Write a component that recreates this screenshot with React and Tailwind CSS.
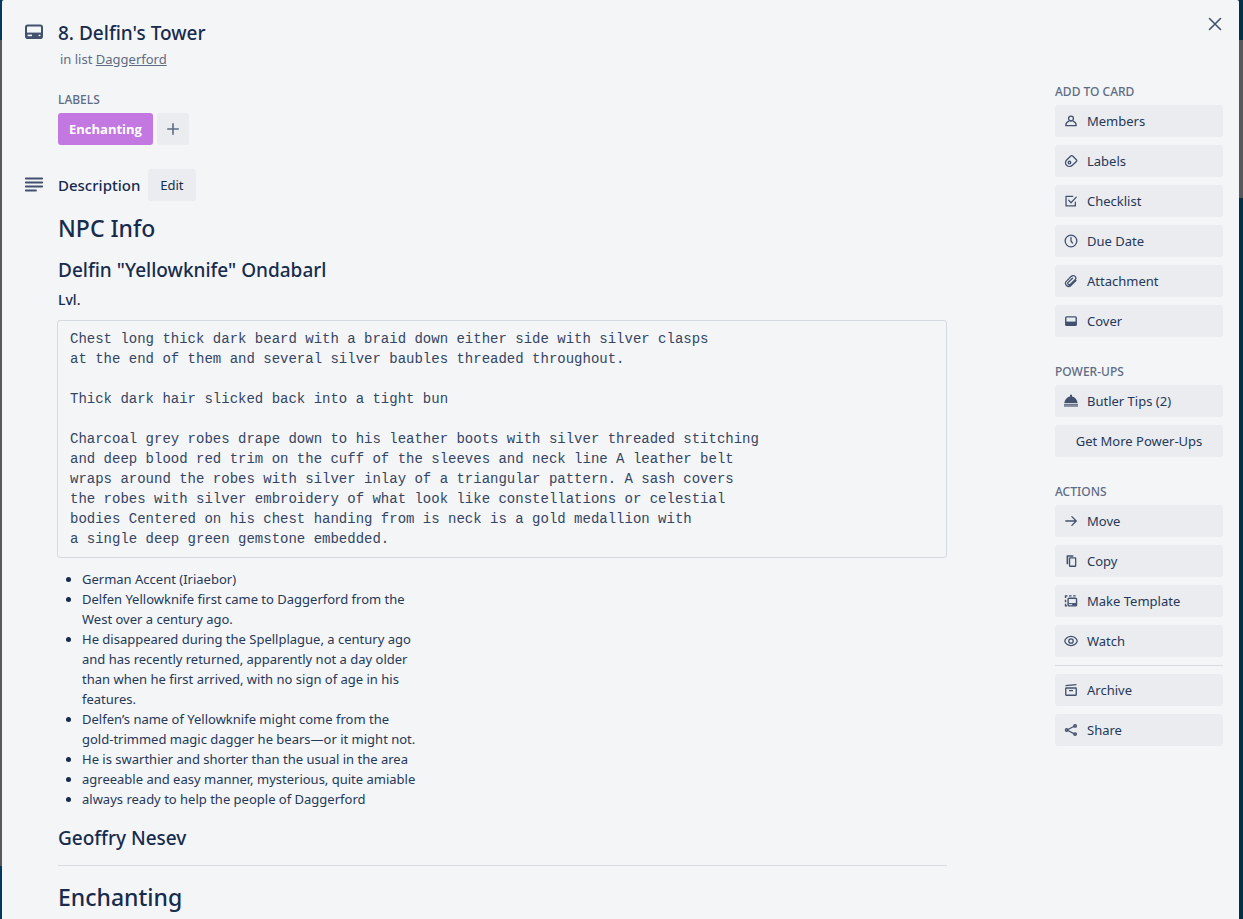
import React from "react";

const icons = {
  members: (
    <g fill="none" stroke="currentColor" strokeWidth="2.2">
      <circle cx="12" cy="7.8" r="4.2" />
      <path d="M8.6 12.2C5.6 13.2 3.4 15.6 3.2 18.6V20H20.8V18.6C20.6 15.6 18.4 13.2 15.4 12.2" strokeLinejoin="round" />
    </g>
  ),
  labels: (
    <g fill="none" stroke="currentColor" strokeWidth="2.2" strokeLinejoin="round">
      <path d="M4.6 10.4L11.6 3.4C12.6 2.4 13.8 2.4 14.8 3.4L21.2 9.8C22.2 10.8 22.2 11.8 21.2 12.8L14.4 19.4C11.4 22.2 7 21.8 4.4 19.2C1.8 16.8 1.8 13.2 4.6 10.4Z" />
      <circle cx="9.4" cy="14.6" r="2.2" />
    </g>
  ),
  checklist: (
    <g fill="none" stroke="currentColor" strokeWidth="2.2" strokeLinecap="round" strokeLinejoin="round">
      <path d="M15 4H3.5V20.5H19.5V14" />
      <path d="M8 10.6L12 15L21 5.4" />
    </g>
  ),
  date: (
    <g fill="none" stroke="currentColor" strokeWidth="2.2" strokeLinecap="round">
      <circle cx="12" cy="12" r="10" />
      <path d="M12 6V12L14.6 15.6" />
    </g>
  ),
  attachment: (
    <path
      d="M20.4 11.2L12.2 19.2C10 21.4 6.4 21.8 4.2 19.6C2 17.4 2.4 14 4.6 11.8L12.2 4.4C14.2 2.4 17.2 2.2 19 4C20.8 5.8 20.4 8.6 18.6 10.4L11 17.6C9.8 18.6 8.2 18.6 7.2 17.6C6.2 16.6 6.4 15 7.4 14L14.6 7.2"
      fill="none"
      stroke="currentColor"
      strokeWidth="2.2"
      strokeLinecap="round"
    />
  ),
  cover: (
    <g>
      <rect x="3" y="5" width="18" height="14.5" rx="1.5" fill="none" stroke="currentColor" strokeWidth="2.4" />
      <path d="M3 13H21V19.5H3Z" fill="currentColor" />
    </g>
  ),
  butler: (
    <g fill="currentColor">
      <path d="M10.3 1.4H13.7V4.2C18.8 5 22.8 9.6 23.4 15.6H0.6C1.2 9.6 5.2 5 10.3 4.2Z" />
      <path d="M0 16.8H24V18.8H0Z" opacity="0.8" />
      <path d="M0 18.8H24V22.2H0Z" opacity="0.6" />
    </g>
  ),
  move: (
    <path
      d="M3 12H20.5M13.5 4.5L21 12L13.5 19.5"
      fill="none"
      stroke="currentColor"
      strokeWidth="2.2"
      strokeLinecap="round"
      strokeLinejoin="round"
    />
  ),
  copy: (
    <g fill="none" stroke="currentColor" strokeWidth="2.2" strokeLinejoin="round">
      <rect x="9.5" y="6.5" width="10.5" height="14.5" rx="1" />
      <path d="M5.8 17.5V3.4H16" strokeWidth="2.8" />
    </g>
  ),
  template: (
    <g fill="none" stroke="currentColor" strokeWidth="2.4">
      <rect x="7" y="7.4" width="14.5" height="13" rx="1.5" />
      <path d="M7.5 16.5H21" strokeWidth="1.8" />
      <path d="M14 18.2H20.5" strokeWidth="3.4" />
      <path d="M2.6 7V3.2H6M8.6 3.2H13M15.6 3.2H20M2.6 10V14M2.6 16.8V20.4H5.2" />
    </g>
  ),
  watch: (
    <g fill="none" stroke="currentColor" strokeWidth="2.2">
      <path d="M12 4.2C6 4.2 1.4 8.6 1.4 12S6 19.8 12 19.8S22.6 15.4 22.6 12S18 4.2 12 4.2Z" />
      <circle cx="12" cy="12" r="3.8" />
    </g>
  ),
  archive: (
    <g fill="none" stroke="currentColor" strokeWidth="2.3">
      <path d="M2.6 4.6L21.4 2.9" />
      <rect x="3" y="8.5" width="18" height="12.5" rx="0.8" />
      <path d="M8.6 13H15.4" />
    </g>
  ),
  share: (
    <g fill="none" stroke="currentColor" strokeWidth="2.2">
      <path d="M5 12L18.5 5.2M5 12L18.5 19" />
      <circle cx="4.6" cy="12" r="2.2" fill="#8b96ab" />
      <circle cx="19" cy="5" r="2.2" fill="#8b96ab" />
      <circle cx="19" cy="19" r="2.2" fill="#8b96ab" />
    </g>
  ),
};

function SideButton({ icon, children }) {
  return (
    <button
      type="button"
      className="flex h-8 w-full items-center gap-2 rounded-[3px] bg-[#eaecf0] px-2 text-left text-[13px] leading-5 text-[#253858] hover:bg-[#dfe1e6]"
    >
      {icon ? (
        <svg viewBox="0 0 24 24" className="size-4 shrink-0 p-px text-[#42526e]" aria-hidden="true">
          {icons[icon]}
        </svg>
      ) : null}
      <span className={icon ? "" : "flex-1 text-center"}>{children}</span>
    </button>
  );
}

function SectionTitle({ children }) {
  return <h3 className="pt-px pb-[3px] text-[12px] leading-5 font-medium text-[#5e6c84] uppercase">{children}</h3>;
}

function SideSection({ title, children }) {
  return (
    <section className="mb-6">
      <SectionTitle>{title}</SectionTitle>
      <div className="flex flex-col gap-2">{children}</div>
    </section>
  );
}

const appearance = `Chest long thick dark beard with a braid down either side with silver clasps
at the end of them and several silver baubles threaded throughout.

Thick dark hair slicked back into a tight bun

Charcoal grey robes drape down to his leather boots with silver threaded stitching
and deep blood red trim on the cuff of the sleeves and neck line A leather belt
wraps around the robes with silver inlay of a triangular pattern. A sash covers
the robes with silver embroidery of what look like constellations or celestial
bodies Centered on his chest handing from is neck is a gold medallion with
a single deep green gemstone embedded.`;

const notes = [
  "German Accent (Iriaebor)",
  "Delfen Yellowknife first came to Daggerford from the\nWest over a century ago.",
  "He disappeared during the Spellplague, a century ago\nand has recently returned, apparently not a day older\nthan when he first arrived, with no sign of age in his\nfeatures.",
  "Delfen’s name of Yellowknife might come from the\ngold-trimmed magic dagger he bears—or it might not.",
  "He is swarthier and shorter than the usual in the area",
  "agreeable and easy manner, mysterious, quite amiable",
  "always ready to help the people of Daggerford",
];

export default function App() {
  return (
    <div className="flex min-h-screen bg-[#00304a] font-['Noto_Sans','Open_Sans',sans-serif] text-[#172b4d]">
      <div className="flex w-[2px] shrink-0 flex-col">
        <div className="h-10 bg-[#033b60]" />
        <div className="flex-1 bg-[#56585b]" />
        <div className="h-[53px] bg-[#023b60]" />
      </div>

      <main className="relative min-w-0 flex-1 rounded-t-[2px] bg-[#f4f5f7] pr-4 pl-[22px]">
        <button type="button" aria-label="Close" className="absolute top-3 right-3 grid size-6 place-items-center text-[#42526e]">
          <svg viewBox="0 0 14 14" className="size-[14px]" aria-hidden="true">
            <path d="M1.5 1.5L12.5 12.5M12.5 1.5L1.5 12.5" stroke="currentColor" strokeWidth="1.6" strokeLinecap="round" />
          </svg>
        </button>

        <header className="flex gap-[14px] pt-5">
          <svg viewBox="0 0 20 16" className="mt-1 h-4 w-5 shrink-0 text-[#42526e]" aria-hidden="true">
            <rect x="2" y="1.4" width="16" height="12.6" rx="1.8" fill="none" stroke="currentColor" strokeWidth="2" />
            <path d="M2 8.6H18V14H2Z" fill="currentColor" />
            <path d="M3.6 11.4H8" stroke="#f4f5f7" strokeWidth="1.6" />
            <path d="M14.6 11.4H16.4" stroke="#f4f5f7" strokeWidth="1.4" />
          </svg>
          <div>
            <h1 className="text-[19px] leading-[26px] font-medium">8. Delfin&apos;s Tower</h1>
            <p className="mt-[3px] ml-[2px] text-[13px] leading-5 text-[#5e6c84]">
              in list{" "}
              <a href="#daggerford" className="underline">
                Daggerford
              </a>
            </p>
          </div>
        </header>

        <div className="flex items-start justify-between gap-6">
          <div className="max-w-[923px] min-w-0 flex-1">
            <section className="pt-5 pl-[34px]">
              <SectionTitle>Labels</SectionTitle>
              <div className="flex gap-1">
                <button type="button" className="h-8 rounded-[3px] bg-[#c377e0] px-[11px] font-['Open_Sans',sans-serif] text-[13px] leading-5 font-bold text-white">
                  Enchanting
                </button>
                <button type="button" aria-label="Add label" className="grid size-8 place-items-center rounded-[3px] bg-[#eaecf0] text-[#5e6c84]">
                  <svg viewBox="0 0 12 12" className="size-3" aria-hidden="true">
                    <path d="M6 0.8V11.2M0.8 6H11.2" stroke="currentColor" strokeWidth="1.6" strokeLinecap="round" />
                  </svg>
                </button>
              </div>
            </section>

            <div className="mt-6 flex items-center gap-[14px]">
              <svg viewBox="0 0 20 16" className="h-4 w-5 shrink-0 text-[#42526e]" aria-hidden="true">
                <path d="M1.8 1.5H18.2M1.8 5.5H18.2M1.8 9.5H18.2M1.8 13.5H12" stroke="currentColor" strokeWidth="1.8" strokeLinecap="round" />
              </svg>
              <div className="flex items-center gap-2">
                <h2 className="text-[15px] leading-5 font-medium">Description</h2>
                <button type="button" className="h-8 rounded-[3px] bg-[#eaecf0] px-3 text-[13px] leading-5">
                  Edit
                </button>
              </div>
            </div>

            <article className="pb-1 pl-[34px] text-[13px] leading-5">
              <h2 className="mt-[13px] text-[23px] leading-7 font-medium">NPC Info</h2>
              <h3 className="mt-4 text-[19px] leading-6 font-medium">Delfin &quot;Yellowknife&quot; Ondabarl</h3>
              <h4 className="mt-2 text-[14px] leading-5 font-medium">Lvl.</h4>
              <pre className="mt-[10px] -ml-px overflow-x-auto rounded-[3px] border border-[#d5d9e0] px-3 py-2 font-['Liberation_Mono',monospace] text-[14px] leading-5 text-[#344563]">
                {appearance}
              </pre>
              <ul className="mt-[11px] list-disc pl-6 text-[#253858] marker:text-[#172b4d]">
                {notes.map((note) => (
                  <li key={note} className="whitespace-pre-line">
                    {note}
                  </li>
                ))}
              </ul>
              <h3 className="mt-[17px] text-[19px] leading-6 font-medium">Geoffry Nesev</h3>
              <hr className="mt-[15px] border-[#d8dbe0]" />
              <h2 className="mt-[17px] text-[23px] leading-7 font-medium">Enchanting</h2>
            </article>
          </div>

          <aside className="w-[168px] shrink-0 pt-3">
            <SideSection title="Add to card">
              <SideButton icon="members">Members</SideButton>
              <SideButton icon="labels">Labels</SideButton>
              <SideButton icon="checklist">Checklist</SideButton>
              <SideButton icon="date">Due Date</SideButton>
              <SideButton icon="attachment">Attachment</SideButton>
              <SideButton icon="cover">Cover</SideButton>
            </SideSection>
            <SideSection title="Power-Ups">
              <SideButton icon="butler">Butler Tips (2)</SideButton>
              <SideButton>Get More Power-Ups</SideButton>
            </SideSection>
            <SideSection title="Actions">
              <SideButton icon="move">Move</SideButton>
              <SideButton icon="copy">Copy</SideButton>
              <SideButton icon="template">Make Template</SideButton>
              <SideButton icon="watch">Watch</SideButton>
              <hr className="border-[#d8dbe0]" />
              <SideButton icon="archive">Archive</SideButton>
              <SideButton icon="share">Share</SideButton>
            </SideSection>
          </aside>
        </div>
      </main>

      <div className="flex w-1 shrink-0 flex-col">
        <div className="h-10 bg-[#00304a]" />
        <div className="h-[158px] bg-[#56585b]" />
      </div>
    </div>
  );
}
